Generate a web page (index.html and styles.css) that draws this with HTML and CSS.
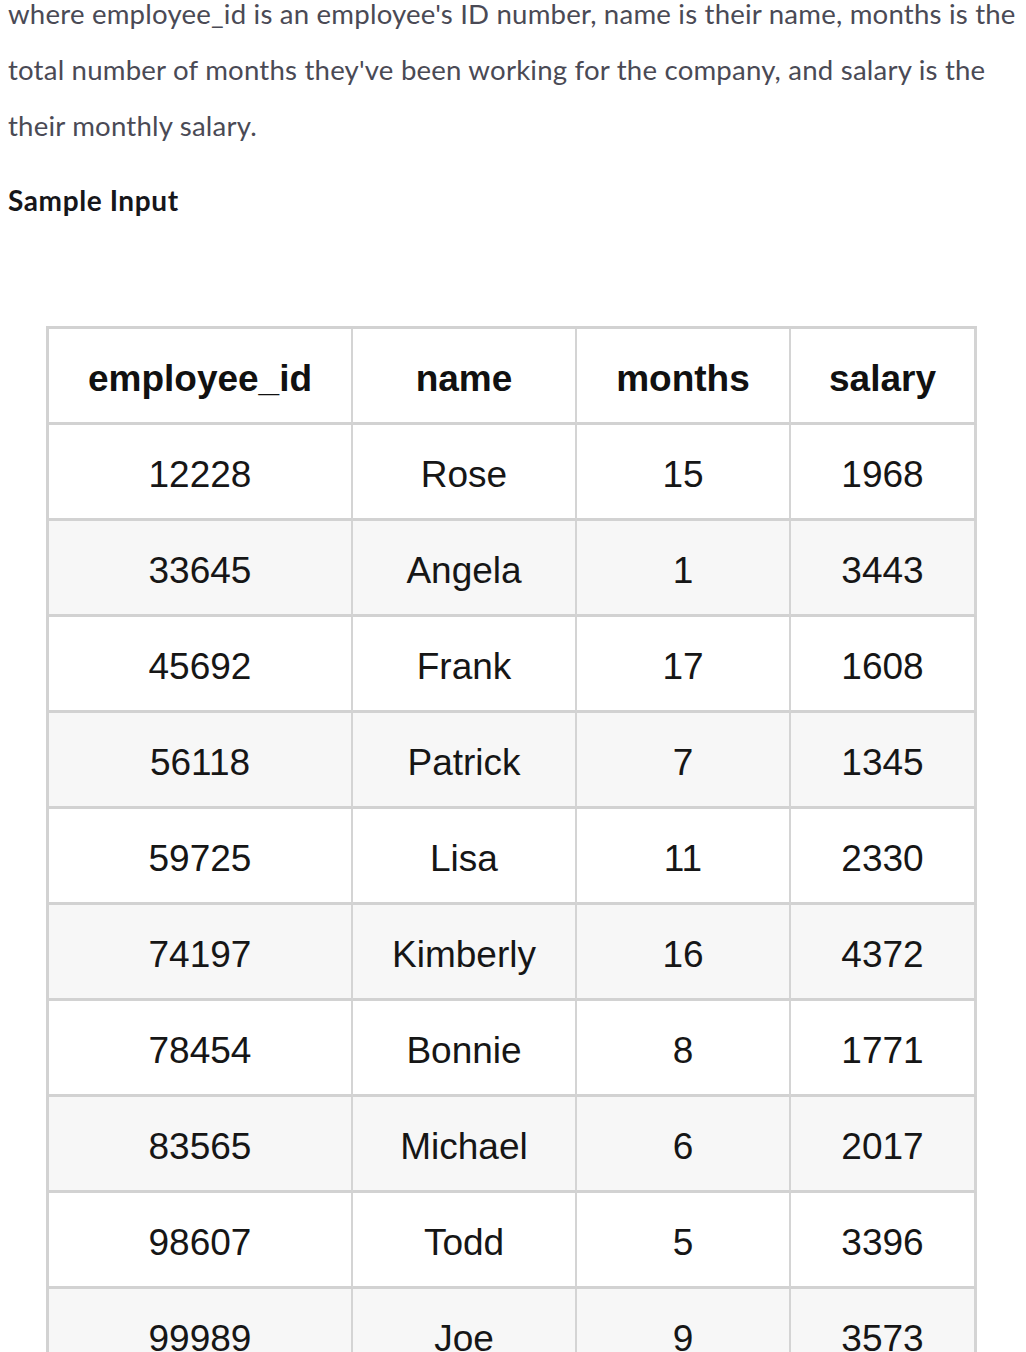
FILE: index.html
```html
<!DOCTYPE html>
<html lang="en">
<head>
<meta charset="utf-8">
<title>Sample Input</title>
<link rel="stylesheet" href="styles.css">
</head>
<body>
<main class="page">
  <p class="desc">where employee_id is an employee's ID number, name is their name, months is the total number of months they've been working for the company, and salary is the their monthly salary.</p>
  <h3 class="section-title">Sample Input</h3>
  <div class="sample-table" role="table">
    <div class="cell head" role="columnheader">employee_id</div>
    <div class="cell head" role="columnheader">name</div>
    <div class="cell head" role="columnheader">months</div>
    <div class="cell head" role="columnheader">salary</div>

    <div class="cell">12228</div><div class="cell">Rose</div><div class="cell">15</div><div class="cell">1968</div>
    <div class="cell alt">33645</div><div class="cell alt">Angela</div><div class="cell alt">1</div><div class="cell alt">3443</div>
    <div class="cell">45692</div><div class="cell">Frank</div><div class="cell">17</div><div class="cell">1608</div>
    <div class="cell alt">56118</div><div class="cell alt">Patrick</div><div class="cell alt">7</div><div class="cell alt">1345</div>
    <div class="cell">59725</div><div class="cell">Lisa</div><div class="cell">11</div><div class="cell">2330</div>
    <div class="cell alt">74197</div><div class="cell alt">Kimberly</div><div class="cell alt">16</div><div class="cell alt">4372</div>
    <div class="cell">78454</div><div class="cell">Bonnie</div><div class="cell">8</div><div class="cell">1771</div>
    <div class="cell alt">83565</div><div class="cell alt">Michael</div><div class="cell alt">6</div><div class="cell alt">2017</div>
    <div class="cell">98607</div><div class="cell">Todd</div><div class="cell">5</div><div class="cell">3396</div>
    <div class="cell alt">99989</div><div class="cell alt">Joe</div><div class="cell alt">9</div><div class="cell alt">3573</div>
  </div>
</main>
</body>
</html>
```

FILE: styles.css
```css
html, body {
  margin: 0;
  padding: 0;
  background: #ffffff;
}

.page {
  padding-left: 8px;
  overflow: hidden;
}

.desc {
  margin: -14px 0 0 0;
  font-family: Lato, "Noto Sans", sans-serif;
  font-size: 27.6px;
  letter-spacing: 0.2px;
  line-height: 56px;
  color: #4a4a55;
  max-width: 1016px;
}

.section-title {
  margin: 18px 0 0 0;
  font-family: Lato, "Noto Sans", sans-serif;
  font-weight: 700;
  font-size: 28px;
  letter-spacing: 0.6px;
  line-height: 56px;
  color: #16161a;
}

.sample-table {
  margin: 98px 0 0 38px;
  display: grid;
  grid-template-columns: 304px 224px 214px 186px;
  width: max-content;
  border-top: 3px solid #d2d2d2;
  border-left: 3px solid #d2d2d2;
  font-family: "Liberation Sans", Arial, sans-serif;
  font-size: 37px;
  color: #161616;
}

.cell {
  height: 86px;
  padding-top: 7px;
  display: flex;
  align-items: center;
  justify-content: center;
  border-right: 2px solid #d4d4d4;
  border-bottom: 3px solid #d2d2d2;
  background: #ffffff;
}

.cell:nth-child(4n) {
  border-right-width: 3px;
}

.cell.alt {
  background: #f7f7f7;
}

.cell.head {
  font-weight: 700;
  color: #111111;
}
```
